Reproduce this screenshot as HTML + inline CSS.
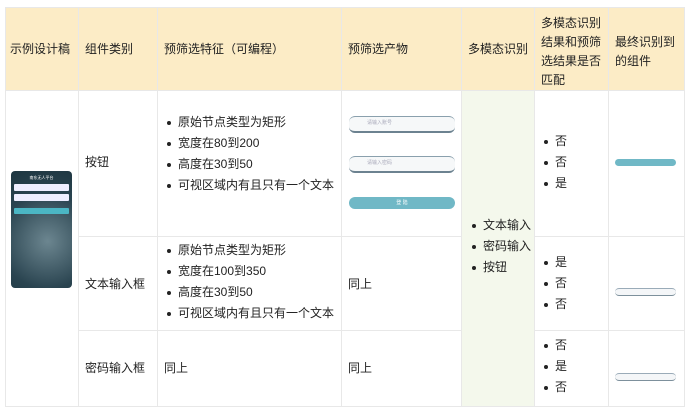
<!DOCTYPE html>
<html><head><meta charset="utf-8"><style>
*{margin:0;padding:0;box-sizing:border-box}
body{width:690px;height:409px;background:#fff;font-family:"Liberation Sans","Noto Sans CJK SC",sans-serif;font-size:12px;color:#222;position:relative;overflow:hidden}
.a{position:absolute}
.hd{background:#fcecc6}
.vl{position:absolute;width:1px;background:#e8e8e8}
.hl{position:absolute;height:1px;background:#e8e8e8}
.t{position:absolute;line-height:16px;white-space:nowrap}
ul{list-style:none}
li{position:relative;padding-left:12px;height:21px;line-height:16px;white-space:nowrap}
li:before{content:"";position:absolute;left:1px;top:7px;width:4px;height:4px;border-radius:50%;background:#222}
.inp{position:absolute;border-radius:6px;background:#f6f8f9;border-top:1px solid #8aa0ad;border-bottom:2px solid #6c8290;font-size:5px;color:#aab;padding-left:18px;line-height:12px}
</style></head><body>
<div class="a hd" style="left:5px;top:7px;width:679px;height:83px"></div>
<div class="a" style="left:461px;top:90px;width:73px;height:316px;background:#f4f8ec"></div>
<div class="hl" style="left:5px;top:7px;width:679px"></div>
<div class="hl" style="left:5px;top:90px;width:679px"></div>
<div class="hl" style="left:78px;top:236px;width:383px"></div>
<div class="hl" style="left:534px;top:236px;width:150px"></div>
<div class="hl" style="left:78px;top:330px;width:383px"></div>
<div class="hl" style="left:534px;top:330px;width:150px"></div>
<div class="hl" style="left:5px;top:406px;width:679px"></div>
<div class="vl" style="left:5px;top:7px;height:400px"></div>
<div class="vl" style="left:78px;top:7px;height:400px"></div>
<div class="vl" style="left:157px;top:7px;height:400px"></div>
<div class="vl" style="left:341px;top:7px;height:400px"></div>
<div class="vl" style="left:461px;top:7px;height:400px"></div>
<div class="vl" style="left:534px;top:7px;height:400px"></div>
<div class="vl" style="left:608px;top:7px;height:400px"></div>
<div class="vl" style="left:684px;top:7px;height:400px"></div>

<div class="t" style="left:10px;top:41px">示例设计稿</div>
<div class="t" style="left:85px;top:41px">组件类别</div>
<div class="t" style="left:164px;top:41px">预筛选特征（可编程）</div>
<div class="t" style="left:348px;top:41px">预筛选产物</div>
<div class="t" style="left:468px;top:41px">多模态识别</div>
<div class="t" style="left:541px;top:14px;line-height:19px">多模态识别<br>结果和预筛<br>选结果是否<br>匹配</div>
<div class="t" style="left:615px;top:33px;line-height:19px">最终识别到<br>的组件</div>

<div class="a" style="left:11px;top:171px;width:61px;height:117px;border-radius:4px;background:radial-gradient(circle at 60% 60%,#6c8690,#2a4450 60%,#1d3540)"></div>
<div class="a" style="left:14px;top:175px;width:55px;text-align:center;font-size:4px;color:#fff">南东无人平台</div>
<div class="a" style="left:14px;top:184px;width:55px;height:7px;background:#eef;border-radius:1px"></div>
<div class="a" style="left:14px;top:194px;width:55px;height:7px;background:#eef;border-radius:1px"></div>
<div class="a" style="left:14px;top:208px;width:55px;height:6px;background:#4bb6c4;border-radius:1px"></div>

<div class="t" style="left:85px;top:154px">按钮</div>
<div class="t" style="left:85px;top:276px">文本输入框</div>
<div class="t" style="left:85px;top:360px">密码输入框</div>

<ul class="a" style="left:166px;top:114px"><li>原始节点类型为矩形</li><li>宽度在80到200</li><li>高度在30到50</li><li>可视区域内有且只有一个文本</li></ul>
<ul class="a" style="left:166px;top:242px"><li>原始节点类型为矩形</li><li>宽度在100到350</li><li>高度在30到50</li><li>可视区域内有且只有一个文本</li></ul>
<div class="t" style="left:164px;top:360px">同上</div>

<div class="inp" style="left:349px;top:116px;width:106px;height:17px">请输入账号</div>
<div class="inp" style="left:349px;top:156px;width:106px;height:17px">请输入密码</div>
<div class="a" style="left:349px;top:197px;width:106px;height:12px;border-radius:6px;background:#70b8c6;color:#fff;font-size:5px;text-align:center;line-height:12px">登 陆</div>
<div class="t" style="left:348px;top:276px">同上</div>
<div class="t" style="left:348px;top:360px">同上</div>

<ul class="a" style="left:471px;top:217px"><li>文本输入</li><li>密码输入</li><li>按钮</li></ul>

<ul class="a" style="left:543px;top:133px"><li>否</li><li>否</li><li>是</li></ul>
<ul class="a" style="left:543px;top:254px"><li>是</li><li>否</li><li>否</li></ul>
<ul class="a" style="left:543px;top:337px"><li>否</li><li>是</li><li>否</li></ul>

<div class="a" style="left:615px;top:159px;width:61px;height:7px;border-radius:4px;background:#70b8c6"></div>
<div class="a" style="left:615px;top:288px;width:61px;height:8px;border-radius:4px;background:#f4f6f8;border-top:1px solid #9aabb8;border-bottom:1px solid #7d909c"></div>
<div class="a" style="left:615px;top:373px;width:61px;height:8px;border-radius:4px;background:#f4f6f8;border-top:1px solid #9aabb8;border-bottom:1px solid #7d909c"></div>
</body></html>
